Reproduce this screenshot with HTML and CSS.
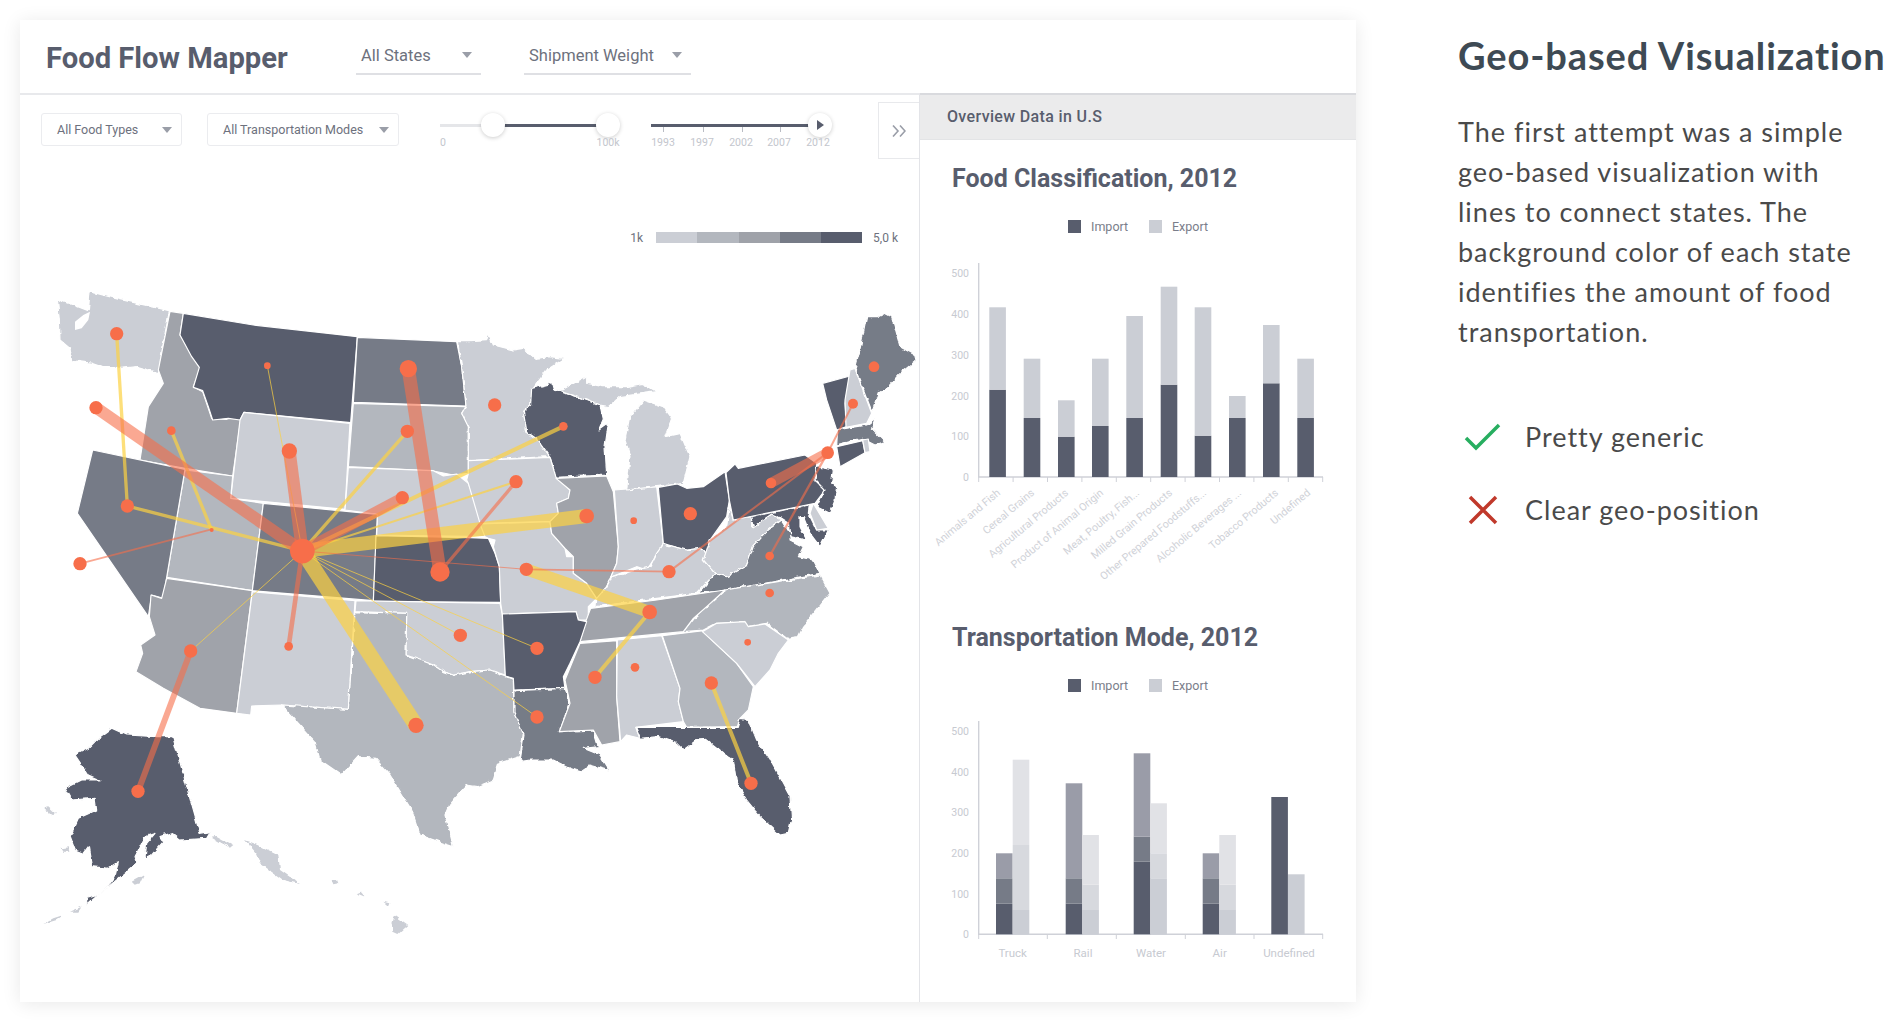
FILE: index.html
```html
<!DOCTYPE html>
<html lang="en">
<head>
    <meta charset="UTF-8">
    <title>Geo-based Visualization</title>
    <link rel="stylesheet" href="styles.css">
</head>
<body>
    <div class="panel">
        <header class="topbar">
            <h1 class="app-title">Food Flow Mapper</h1>
            <div class="dropdown dropdown-states"><span>All States</span><i class="caret"></i></div>
            <div class="dropdown dropdown-weight"><span>Shipment Weight</span><i class="caret"></i></div>
        </header>

        <div class="panel-body">
            <main class="map-area">
                <div class="toolbar">
                    <div class="select select-food"><span>All Food Types</span><i class="caret"></i></div>
                    <div class="select select-mode"><span>All Transportation Modes</span><i class="caret"></i></div>

                    <div class="range range-weight">
                        <div class="track"></div>
                        <div class="track-fill" style="left: 53px; width: 115px"></div>
                        <div class="knob" style="left: 53px"></div>
                        <div class="knob" style="left: 168px"></div>
                        <span class="range-label" style="left: 3px">0</span>
                        <span class="range-label" style="left: 168px">100k</span>
                    </div>

                    <div class="range range-year">
                        <div class="track-fill" style="left: 0; width: 168px"></div>
                        <i class="tick" style="left: 12px"></i>
                        <i class="tick" style="left: 52px"></i>
                        <i class="tick" style="left: 91px"></i>
                        <i class="tick" style="left: 129px"></i>
                        <div class="knob" style="left: 169px"><i class="play"></i></div>
                        <span class="range-label" style="left: 12px">1993</span>
                        <span class="range-label" style="left: 51px">1997</span>
                        <span class="range-label" style="left: 90px">2002</span>
                        <span class="range-label" style="left: 128px">2007</span>
                        <span class="range-label" style="left: 167px">2012</span>
                    </div>

                    <button class="collapse" type="button">
                        <svg width="14" height="12" viewBox="0 0 14 12"><path class="chevron" d="M1 0.5 L6 6 L1 11.5 M8 0.5 L13 6 L8 11.5"/></svg>
                    </button>
                </div>

                <div class="scale">
                    <span>1k</span>
                    <div class="scale-bar">
                        <i class="c1"></i><i class="c2"></i><i class="c3"></i><i class="c4"></i><i class="c5"></i>
                    </div>
                    <span>5,0 k</span>
                </div>

                <svg class="map" viewBox="0 0 2700 2196">
                    <defs>
                        <filter id="rough" x="-5%" y="-5%" width="110%" height="110%">
                            <feTurbulence type="fractalNoise" baseFrequency="0.05" numOctaves="2" seed="4"/>
                            <feDisplacementMap in="SourceGraphic" scale="14" xChannelSelector="R" yChannelSelector="G"/>
                        </filter>
                    </defs>
                    <!-- states, traced at 3x -->
                    <g class="states">
                        <polygon class="s1" filter="url(#rough)" points="112,85 130,95 160,105 205,122 210,65 300,88 448,122 415,308 350,290 300,295 250,292 215,280 155,272 150,235 120,210 118,150"/>
                        <polygon class="s3" points="450,124 490,130 480,195 520,260 540,295 520,350 548,365 575,445 620,448 662,430 662,450 638,618 495,595 360,570 385,410 430,340 415,300"/>
                        <polygon class="s5" points="490,130 700,165 1012,200 992,458 672,427 660,450 625,445 578,450 565,410 548,362 520,352 538,292 515,260 480,195"/>
                        <polygon class="s4" points="1012,202 1310,215 1325,290 1338,408 1000,397"/>
                        <polygon class="s2" points="1000,400 1338,410 1325,430 1345,470 1345,610 1300,615 1240,603 985,590"/>
                        <polygon class="s1" points="672,427 990,460 975,718 632,685 660,450"/>
                        <polygon class="s1" points="985,592 1240,602 1270,618 1310,612 1345,640 1375,720 1395,800 1070,795 1072,733 975,720"/>
                        <polygon class="s2" points="495,600 638,618 632,685 730,700 697,962 440,922"/>
                        <polygon class="s4" points="218,540 495,598 440,922 430,985 395,975 385,1040 172,730"/>
                        <polygon class="s4" points="730,700 1072,733 1060,992 697,962"/>
                        <polygon class="s5" points="1068,797 1350,803 1405,805 1425,850 1438,890 1442,997 1060,995"/>
                        <polygon class="s3" points="440,925 697,962 650,1330 540,1315 430,1255 348,1205 368,1150 362,1125 405,1095 388,1040 393,975 425,985"/>
                        <polygon class="s1" points="697,965 1005,992 985,1318 785,1305 695,1308 692,1335 650,1330"/>
                        <polygon class="s1" points="1008,992 1440,1000 1447,1035 1456,1215 1410,1200 1350,1205 1300,1215 1270,1205 1240,1185 1200,1170 1158,1155 1160,1030 1005,1025"/>
                        <polygon class="s2" filter="url(#rough)" points="1005,1025 1160,1030 1158,1155 1200,1170 1240,1185 1270,1205 1300,1215 1350,1205 1410,1200 1480,1225 1482,1330 1510,1390 1500,1460 1435,1480 1420,1530 1370,1550 1340,1545 1285,1610 1275,1635 1290,1690 1300,1730 1270,1720 1200,1695 1175,1620 1110,1515 1065,1465 1015,1460 965,1515 900,1470 885,1415 785,1305 985,1318"/>
                        <polygon class="s5" filter="url(#rough)" points="275,1375 320,1395 410,1400 458,1400 540,1690 572,1685 560,1705 480,1710 455,1688 420,1700 430,1715 395,1755 375,1765 380,1720 405,1690 375,1700 345,1760 352,1780 290,1830 240,1870 200,1905 200,1885 235,1875 270,1840 285,1820 295,1775 265,1795 215,1790 205,1730 190,1750 165,1740 150,1700 175,1645 230,1620 225,1585 155,1590 135,1555 185,1530 240,1530 205,1515 165,1455 205,1435 240,1400"/>

                        <polygon class="s1" filter="url(#rough)" points="1312,215 1350,215 1400,212 1405,190 1420,225 1480,240 1510,235 1545,265 1590,260 1635,265 1580,300 1540,355 1532,405 1510,425 1520,485 1555,510 1590,560 1345,572 1345,470 1325,430 1338,408 1325,290"/>
                        <polygon class="s5" filter="url(#rough)" points="1535,355 1595,340 1600,358 1670,380 1740,405 1750,450 1737,480 1765,460 1755,530 1760,615 1608,622 1590,560 1555,510 1520,485 1510,425 1532,405"/>
                        <polygon class="s1" points="1345,572 1590,562 1608,622 1650,660 1645,685 1610,700 1615,730 1590,755 1380,760 1345,640 1340,630 1345,610"/>
                        <polygon class="s1" points="1380,762 1590,755 1595,790 1635,835 1640,860 1660,860 1660,910 1700,940 1730,985 1705,1010 1705,1050 1675,1050 1668,1025 1447,1032 1442,1000 1438,890 1420,830 1425,810 1405,805 1395,800"/>
                        <polygon class="s3" points="1608,625 1760,618 1780,665 1795,830 1790,880 1760,950 1730,985 1700,940 1660,910 1660,860 1635,835 1595,790 1590,755 1615,730 1610,700 1645,685 1650,660"/>
                        <polygon class="s1" points="1783,660 1910,650 1930,820 1900,870 1880,900 1850,890 1775,920 1760,950 1790,880 1795,830"/>
                        <polygon class="s1" filter="url(#rough)" points="1820,660 1830,560 1815,510 1830,440 1870,390 1930,410 1955,445 1935,500 1980,490 2010,560 1990,640 1975,642"/>
                        <polygon class="s1" filter="url(#rough)" points="1625,360 1700,318 1700,340 1750,350 1820,350 1870,340 1910,365 1870,370 1800,380 1765,410 1740,405 1670,380 1600,358"/>
                        <polygon class="s5" points="1915,652 1972,642 2000,655 2050,650 2115,605 2128,690 2120,740 2070,810 2060,850 2040,835 2000,840 1960,830 1930,820"/>
                        <polygon class="s1" filter="url(#rough)" points="1775,920 1850,900 1890,890 1910,850 1930,822 1960,830 2000,840 2040,835 2060,850 2050,870 2085,910 2040,960 2030,970 1910,985 1728,1010 1730,985 1760,950"/>
                        <polygon class="s1" filter="url(#rough)" points="2070,810 2120,770 2128,710 2140,750 2195,740 2195,770 2255,732 2285,750 2245,780 2200,830 2180,885 2120,920 2085,910 2050,870"/>
                        <polygon class="s4" filter="url(#rough)" points="2035,970 2085,910 2120,920 2180,885 2200,830 2245,780 2285,750 2310,790 2310,810 2350,830 2335,860 2380,870 2400,910 2120,960"/>
                        <polygon class="s5" filter="url(#rough)" points="2192,740 2368,705 2365,730 2390,780 2425,780 2400,830 2370,790 2350,740 2340,740 2340,770 2360,810 2310,800 2305,760 2275,740 2255,732 2200,770"/>
                        <polygon class="s1" points="2380,700 2425,775 2390,780 2370,730"/>
                        <polygon class="s5" points="2118,608 2145,582 2155,595 2355,555 2390,580 2385,630 2415,660 2385,700 2140,750 2128,690"/>
                        <polygon class="s5" filter="url(#rough)" points="2390,590 2440,600 2435,640 2450,650 2445,690 2430,730 2390,710 2415,660 2385,630"/>
                        <polygon class="s5" points="2408,340 2490,318 2475,400 2480,470 2450,480 2420,390"/>
                        <polygon class="s1" points="2490,300 2505,295 2555,430 2540,460 2478,472 2475,390"/>
                        <polygon class="s4" filter="url(#rough)" points="2540,140 2575,140 2595,130 2615,140 2640,230 2685,255 2688,272 2640,310 2605,350 2575,370 2555,425 2505,295 2520,240"/>
                        <polygon class="s4" filter="url(#rough)" points="2450,480 2540,465 2565,445 2555,475 2595,515 2565,525 2525,505 2447,525"/>
                        <polygon class="s5" points="2450,530 2528,512 2535,548 2460,590"/>
                        <polygon class="s1" points="2528,510 2545,507 2550,545 2535,548"/>
                        <polygon class="s2" filter="url(#rough)" points="1990,1085 2020,1045 2060,1010 2115,960 2400,915 2430,970 2390,1020 2350,1070 2335,1100 2300,1105 2240,1060 2180,1070 2170,1055 2090,1060 2050,1080"/>
                        <polygon class="s3" points="1712,1015 1910,990 2115,960 2060,1010 2020,1045 1990,1085 1680,1115 1695,1060"/>
                        <polygon class="s5" points="1447,1032 1668,1025 1675,1050 1700,1055 1680,1115 1650,1180 1630,1220 1635,1255 1482,1260 1480,1225 1456,1218"/>
                        <polygon class="s4" filter="url(#rough)" points="1482,1262 1635,1255 1650,1300 1618,1385 1720,1380 1735,1430 1690,1435 1740,1455 1770,1502 1710,1485 1680,1505 1650,1495 1600,1470 1530,1470 1500,1475 1512,1395 1482,1330"/>
                        <polygon class="s3" points="1680,1120 1790,1112 1790,1280 1800,1415 1745,1425 1720,1380 1618,1385 1650,1300 1635,1230"/>
                        <polygon class="s1" points="1792,1110 1925,1097 1980,1255 1975,1295 1990,1355 1847,1372 1860,1405 1820,1395 1802,1415 1790,1280"/>
                        <polygon class="s2" points="1927,1097 2050,1082 2080,1115 2150,1180 2200,1250 2185,1320 2160,1345 2152,1370 2000,1372 1990,1355 1975,1295 1980,1255"/>
                        <polygon class="s1" points="2047,1085 2090,1060 2175,1055 2185,1070 2235,1062 2305,1110 2275,1150 2250,1200 2205,1250 2150,1180 2080,1115"/>
                        <polygon class="s5" filter="url(#rough)" points="1847,1372 2000,1372 2152,1372 2160,1345 2185,1348 2210,1410 2250,1470 2310,1580 2315,1650 2305,1690 2280,1695 2220,1640 2180,1590 2150,1540 2140,1470 2100,1440 2060,1408 2030,1410 1990,1440 1970,1420 1915,1400 1860,1405"/>
                    </g>

                    <path class="sound" d="M210 125 L190 135 165 155 165 180 185 175 205 150Z"/>

                    <!-- islands -->
                    <g class="islands" filter="url(#rough)">
                        <polygon points="70,1615 85,1612 108,1632 95,1635"/>
                        <polygon points="125,1735 145,1732 148,1745 130,1745"/>
                        <polygon points="150,1925 185,1910 175,1925"/>
                        <polygon points="70,1962 100,1945 130,1935 110,1950"/>
                        <polygon points="335,1835 372,1815 360,1840 345,1845"/>
                        <polygon points="572,1700 590,1698 640,1725 630,1733"/>
                        <polygon points="675,1710 715,1725 775,1755 780,1800 840,1842 790,1830 720,1780 705,1745"/>
                        <polygon points="935,1830 950,1827 955,1840 940,1843"/>
                        <polygon points="1010,1870 1022,1865 1035,1880"/>
                        <polygon points="1090,1895 1108,1900 1105,1908"/>
                        <polygon points="1122,1935 1165,1965 1135,1992 1120,1985 1115,1960"/>
                    </g>

                    <!-- flows -->
                    <g class="flows-y">
                        <line x1="290" y1="191" x2="322" y2="708" stroke-width="10"/>
                        <line x1="322" y1="708" x2="847" y2="843" stroke-width="10"/>
                        <line x1="454" y1="482" x2="574" y2="778" stroke-width="10"/>
                        <line x1="742" y1="287" x2="847" y2="843" stroke-width="3"/>
                        <line x1="1162" y1="484" x2="847" y2="843" stroke-width="10"/>
                        <line x1="1630" y1="469" x2="847" y2="843" stroke-width="12"/>
                        <line x1="1488" y1="635" x2="847" y2="843" stroke-width="6"/>
                        <line x1="1700" y1="738" x2="847" y2="843" stroke-width="42"/>
                        <line x1="1188" y1="1366" x2="847" y2="843" stroke-width="46"/>
                        <line x1="512" y1="1143" x2="847" y2="843" stroke-width="3"/>
                        <line x1="1321" y1="1096" x2="847" y2="843" stroke-width="3"/>
                        <line x1="1551" y1="1135" x2="847" y2="843" stroke-width="3"/>
                        <line x1="1551" y1="1341" x2="847" y2="843" stroke-width="3"/>
                        <line x1="1519" y1="898" x2="1889" y2="1026" stroke-width="36"/>
                        <line x1="1889" y1="1026" x2="1725" y2="1222" stroke-width="12"/>
                        <line x1="2074" y1="1239" x2="2193" y2="1540" stroke-width="12"/>
                    </g>
                    <g class="flows-o">
                        <line x1="228" y1="413" x2="847" y2="843" stroke-width="36"/>
                        <line x1="180" y1="881" x2="574" y2="778" stroke-width="5"/>
                        <line x1="808" y1="543" x2="847" y2="843" stroke-width="38"/>
                        <line x1="1165" y1="296" x2="1260" y2="906" stroke-width="40"/>
                        <line x1="1147" y1="683" x2="847" y2="843" stroke-width="32"/>
                        <line x1="1260" y1="906" x2="1488" y2="635" stroke-width="10"/>
                        <line x1="847" y1="843" x2="806" y2="1129" stroke-width="14"/>
                        <line x1="512" y1="1143" x2="354" y2="1564" stroke-width="18"/>
                        <line x1="847" y1="843" x2="1519" y2="898" stroke-width="3"/>
                        <line x1="1519" y1="898" x2="1947" y2="905" stroke-width="5"/>
                        <line x1="1947" y1="905" x2="2423" y2="548" stroke-width="6"/>
                        <line x1="2253" y1="639" x2="2423" y2="548" stroke-width="30"/>
                        <line x1="2249" y1="858" x2="2423" y2="548" stroke-width="7"/>
                        <line x1="2499" y1="401" x2="2423" y2="548" stroke-width="6"/>
                    </g>

                    <g class="dots">
                        <circle cx="290" cy="191" r="20"/>
                        <circle cx="228" cy="413" r="20"/>
                        <circle cx="454" cy="482" r="13"/>
                        <circle cx="742" cy="287" r="10"/>
                        <circle cx="808" cy="543" r="23"/>
                        <circle cx="1165" cy="296" r="26"/>
                        <circle cx="1162" cy="484" r="20"/>
                        <circle cx="1147" cy="683" r="20"/>
                        <circle cx="322" cy="708" r="20"/>
                        <circle cx="575" cy="780" r="6"/>
                        <circle cx="180" cy="881" r="20"/>
                        <circle cx="847" cy="843" r="37"/>
                        <circle cx="1260" cy="906" r="29"/>
                        <circle cx="1321" cy="1096" r="20"/>
                        <circle cx="806" cy="1129" r="13"/>
                        <circle cx="512" cy="1143" r="20"/>
                        <circle cx="354" cy="1564" r="20"/>
                        <circle cx="1188" cy="1366" r="23"/>
                        <circle cx="1424" cy="405" r="20"/>
                        <circle cx="1630" cy="469" r="13"/>
                        <circle cx="1488" cy="635" r="20"/>
                        <circle cx="1700" cy="738" r="22"/>
                        <circle cx="1841" cy="752" r="10"/>
                        <circle cx="2011" cy="731" r="20"/>
                        <circle cx="1519" cy="898" r="20"/>
                        <circle cx="1947" cy="905" r="20"/>
                        <circle cx="1889" cy="1026" r="22"/>
                        <circle cx="2253" cy="639" r="16"/>
                        <circle cx="2423" cy="548" r="19"/>
                        <circle cx="2499" cy="401" r="15"/>
                        <circle cx="2562" cy="290" r="16"/>
                        <circle cx="2249" cy="858" r="13"/>
                        <circle cx="2249" cy="969" r="13"/>
                        <circle cx="2183" cy="1117" r="10"/>
                        <circle cx="1551" cy="1135" r="20"/>
                        <circle cx="1551" cy="1341" r="20"/>
                        <circle cx="1725" cy="1222" r="20"/>
                        <circle cx="1845" cy="1192" r="13"/>
                        <circle cx="2074" cy="1239" r="20"/>
                        <circle cx="2193" cy="1540" r="20"/>
                    </g>
                </svg>
            </main>

            <aside class="overview">
                <div class="overview-head">Overview Data in U.S</div>

                <section class="chart-block chart-food">
                    <h2 class="chart-title">Food Classification, 2012</h2>
                    <div class="chart-legend">
                        <i class="swatch c5"></i><span>Import</span>
                        <i class="swatch c1"></i><span>Export</span>
                    </div>
                    <svg class="chart chart-1" viewBox="920 255 436 345">
                        <g class="y-labels">
                            <text x="969" y="277">500</text>
                            <text x="969" y="318">400</text>
                            <text x="969" y="359">300</text>
                            <text x="969" y="400">200</text>
                            <text x="969" y="440">100</text>
                            <text x="969" y="481">0</text>
                        </g>
                        <path class="axis" d="M978.7 263 V477 H1323"/>
                        <path class="axis-ticks" d="M978.7 477 v5 M1013.1 477 v5 M1047.5 477 v5 M1081.9 477 v5 M1116.3 477 v5 M1150.7 477 v5 M1185.1 477 v5 M1219.5 477 v5 M1253.9 477 v5 M1288.3 477 v5 M1322.7 477 v5"/>
                        <g class="fill-5">
                            <rect x="989.3" y="389.7" width="16.6" height="87.3"/>
                            <rect x="1023.7" y="418" width="16.6" height="59"/>
                            <rect x="1058" y="436.7" width="16.6" height="40.3"/>
                            <rect x="1092" y="426" width="16.6" height="51"/>
                            <rect x="1126.3" y="418" width="16.6" height="59"/>
                            <rect x="1160.7" y="384.7" width="16.6" height="92.3"/>
                            <rect x="1194.7" y="435.7" width="16.6" height="41.3"/>
                            <rect x="1229" y="418" width="16.6" height="59"/>
                            <rect x="1263" y="383.3" width="16.6" height="93.7"/>
                            <rect x="1297.3" y="418" width="16.6" height="59"/>
                        </g>
                        <g class="fill-1">
                            <rect x="989.3" y="307.3" width="16.6" height="82.4"/>
                            <rect x="1023.7" y="358.7" width="16.6" height="59.3"/>
                            <rect x="1058" y="400.3" width="16.6" height="36.4"/>
                            <rect x="1092" y="358.7" width="16.6" height="67.3"/>
                            <rect x="1126.3" y="316" width="16.6" height="102"/>
                            <rect x="1160.7" y="286.7" width="16.6" height="98"/>
                            <rect x="1194.7" y="307.3" width="16.6" height="128.4"/>
                            <rect x="1229" y="396" width="16.6" height="22"/>
                            <rect x="1263" y="325" width="16.6" height="58.3"/>
                            <rect x="1297.3" y="358.7" width="16.6" height="59.3"/>
                        </g>
                        <g class="x-rotated">
                            <text transform="translate(1001 494) rotate(-40)">Animals and Fish</text>
                            <text transform="translate(1035 494) rotate(-40)">Cereal Grains</text>
                            <text transform="translate(1069 494) rotate(-40)">Agricultural Products</text>
                            <text transform="translate(1104 494) rotate(-40)">Product of Animal Origin</text>
                            <text transform="translate(1140 494) rotate(-40)">Meat, Poultry, Fish...</text>
                            <text transform="translate(1173 494) rotate(-40)">Milled Grain Products</text>
                            <text transform="translate(1207 494) rotate(-40)">Other Prepared Foodstuffs...</text>
                            <text transform="translate(1242 494) rotate(-40)">Alcoholic Beverages ...</text>
                            <text transform="translate(1279 494) rotate(-40)">Tobacco Products</text>
                            <text transform="translate(1311 494) rotate(-40)">Undefined</text>
                        </g>
                    </svg>
                </section>

                <section class="chart-block chart-mode">
                    <h2 class="chart-title">Transportation Mode, 2012</h2>
                    <div class="chart-legend">
                        <i class="swatch c5"></i><span>Import</span>
                        <i class="swatch c1"></i><span>Export</span>
                    </div>
                    <svg class="chart chart-2" viewBox="920 715 436 250">
                        <g class="y-labels">
                            <text x="969" y="736">500</text>
                            <text x="969" y="777">400</text>
                            <text x="969" y="817">300</text>
                            <text x="969" y="858">200</text>
                            <text x="969" y="899">100</text>
                            <text x="969" y="939">0</text>
                        </g>
                        <path class="axis" d="M978.7 722 V935.3 H1323"/>
                        <path class="axis-ticks" d="M978.7 935 v5 M1047.3 935 v5 M1116.3 935 v5 M1185.3 935 v5 M1254 935 v5 M1322.7 935 v5"/>
                        <g class="fill-5">
                            <rect x="996" y="904.7" width="16.6" height="30.6"/>
                            <rect x="1065.7" y="904.7" width="16.6" height="30.6"/>
                            <rect x="1133.7" y="862.7" width="16.6" height="72.6"/>
                            <rect x="1202.7" y="904.7" width="16.6" height="30.6"/>
                            <rect x="1271.3" y="798" width="16.6" height="137.3"/>
                        </g>
                        <g class="fill-4">
                            <rect x="996" y="879.3" width="16.6" height="25.4"/>
                            <rect x="1065.7" y="879.3" width="16.6" height="25.4"/>
                            <rect x="1133.7" y="837.7" width="16.6" height="25"/>
                            <rect x="1202.7" y="879.3" width="16.6" height="25.4"/>
                        </g>
                        <g class="fill-3">
                            <rect x="996" y="854.3" width="16.6" height="25"/>
                            <rect x="1065.7" y="784.3" width="16.6" height="95"/>
                            <rect x="1133.7" y="754.3" width="16.6" height="83.4"/>
                            <rect x="1202.7" y="854.3" width="16.6" height="25"/>
                        </g>
                        <g class="fill-1">
                            <rect x="1012.7" y="911" width="16.6" height="24.3"/>
                            <rect x="1082.3" y="911" width="16.6" height="24.3"/>
                            <rect x="1150.3" y="879.3" width="16.6" height="56"/>
                            <rect x="1219.3" y="911" width="16.6" height="24.3"/>
                            <rect x="1288" y="875.3" width="16.6" height="60"/>
                        </g>
                        <g class="fill-e2">
                            <rect x="1012.7" y="846" width="16.6" height="65"/>
                            <rect x="1082.3" y="885.7" width="16.6" height="25.3"/>
                            <rect x="1150.3" y="854.3" width="16.6" height="25"/>
                            <rect x="1219.3" y="885.7" width="16.6" height="25.3"/>
                        </g>
                        <g class="fill-e3">
                            <rect x="1012.7" y="760.7" width="16.6" height="85.3"/>
                            <rect x="1082.3" y="836" width="16.6" height="49.7"/>
                            <rect x="1150.3" y="804.3" width="16.6" height="50"/>
                            <rect x="1219.3" y="836" width="16.6" height="49.7"/>
                        </g>
                        <g class="x-labels">
                            <text x="1012.7" y="958">Truck</text>
                            <text x="1083" y="958">Rail</text>
                            <text x="1151" y="958">Water</text>
                            <text x="1219.7" y="958">Air</text>
                            <text x="1289" y="958">Undefined</text>
                        </g>
                    </svg>
                </section>
            </aside>
        </div>
    </div>

    <div class="notes">
        <h2 class="notes-title">Geo-based Visualization</h2>
        <p class="notes-text">The first attempt was a simple geo-based visualization with lines to connect states. The background color of each state identifies the amount of food transportation.</p>
        <ul class="notes-list">
            <li>
                <svg class="mark" width="38" height="30" viewBox="0 0 38 30"><path class="mark-yes" d="M3 16 L13 26 L36 3"/></svg>
                Pretty generic
            </li>
            <li>
                <svg class="mark" width="38" height="30" viewBox="0 0 38 30"><path class="mark-no" d="M7 2 L33 28 M33 2 L7 28"/></svg>
                Clear geo-position
            </li>
        </ul>
    </div>
</body>
</html>
```

FILE: styles.css
```css
/* base */
* {
    margin: 0;
    padding: 0;
    box-sizing: border-box;
}
body {
    display: flex;
    align-items: flex-start;
    width: 1890px;
    height: 1036px;
    overflow: hidden;
    background: #fff;
    font-family: Roboto, sans-serif;
    color: #585d6d;
}
i {
    display: block;
}

/* dashboard panel */
.panel {
    width: 1336px;
    height: 982px;
    margin: 20px 0 0 20px;
    background: #fff;
    box-shadow: 0 2px 18px rgba(0, 0, 0, 0.09);
}
.topbar {
    display: flex;
    align-items: flex-end;
    height: 73px;
}
.app-title {
    width: 242px;
    margin: 0 68px 18px 26px;
    font-size: 29.2px;
    font-weight: 700;
    line-height: 34px;
    white-space: nowrap;
}
.dropdown {
    display: flex;
    align-items: center;
    justify-content: space-between;
    height: 38px;
    margin-bottom: 18px;
    padding: 0 9px 0 5px;
    border-bottom: 2px solid #dfe0e4;
    font-size: 16.5px;
    color: #6d717d;
}
.dropdown-states {
    width: 125px;
}
.dropdown-weight {
    width: 167px;
    margin-left: 43px;
}
.caret {
    width: 0;
    height: 0;
    border-left: 5px solid transparent;
    border-right: 5px solid transparent;
    border-top: 6px solid #9a9ea8;
}
.panel-body {
    display: flex;
    height: 909px;
}

/* map side */
.map-area {
    width: 900px;
    border-top: 2px solid #e8e9ec;
    border-right: 1px solid #e3e4e8;
}
.toolbar {
    display: flex;
    align-items: flex-start;
    height: 137px;
    padding: 7px 0 0 21px;
}
.select {
    display: flex;
    align-items: center;
    justify-content: space-between;
    height: 33px;
    margin-top: 11px;
    padding: 0 9px 0 15px;
    border: 1px solid #ebecef;
    border-radius: 3px;
    font-size: 12.5px;
    color: #6d717d;
}
.select-food {
    width: 141px;
}
.select-mode {
    width: 192px;
    margin-left: 25px;
}
.range {
    position: relative;
    width: 180px;
    height: 50px;
}
.range-weight {
    margin-left: 41px;
}
.range-year {
    margin-left: 31px;
}
.track,
.track-fill {
    position: absolute;
    top: 22px;
    height: 3px;
}
.track {
    left: 0;
    width: 168px;
    background: #e5e6e9;
}
.track-fill {
    background: #585d6d;
}
.tick {
    position: absolute;
    top: 25px;
    width: 1px;
    height: 5px;
    background: #b9bcc4;
}
.knob {
    position: absolute;
    top: 11px;
    width: 24px;
    height: 24px;
    margin-left: -12px;
    border-radius: 50%;
    background: #fff;
    box-shadow: 0 1px 4px rgba(0, 0, 0, 0.2);
}
.play {
    width: 0;
    height: 0;
    margin: 7px 0 0 9px;
    border-top: 5px solid transparent;
    border-bottom: 5px solid transparent;
    border-left: 7px solid #585d6d;
}
.range-label {
    position: absolute;
    top: 35px;
    transform: translateX(-50%);
    font-size: 10.5px;
    line-height: 12px;
    color: #c3c6cd;
}
.collapse {
    display: flex;
    align-items: center;
    justify-content: center;
    width: 41px;
    height: 57px;
    margin-left: auto;
    background: #fff;
    border: 1px solid #e8e9ec;
    border-right: none;
}
.chevron {
    fill: none;
    stroke: #9a9ea8;
    stroke-width: 1.6;
}
.scale {
    display: flex;
    align-items: center;
    justify-content: flex-end;
    height: 11px;
    margin-bottom: 27px;
    padding-right: 21px;
    font-size: 12px;
    color: #6d717d;
}
.scale-bar {
    display: flex;
    margin: 0 11px 0 13px;
}
.scale-bar i {
    width: 41.2px;
    height: 11px;
}
.c1 { background: #cbced5; }
.c2 { background: #b3b7be; }
.c3 { background: #9fa2a9; }
.c4 { background: #767b87; }
.c5 { background: #585d6d; }

.map {
    display: block;
    width: 900px;
    height: 732px;
    overflow: visible;
}
.states polygon {
    stroke: #fff;
    stroke-width: 3.5;
    stroke-linejoin: round;
}
.s1 { fill: #cbced5; }
.s2 { fill: #b3b7be; }
.s3 { fill: #a0a3aa; }
.s4 { fill: #767b87; }
.s5 { fill: #585d6d; }
.sound {
    fill: #fff;
}
.islands {
    fill: #cbced5;
}
.flows-y line {
    stroke: #fcd241;
    stroke-opacity: 0.7;
}
.flows-o line {
    stroke: #f76e4a;
    stroke-opacity: 0.6;
}
.dots {
    fill: #f76e4a;
}

/* overview side */
.overview {
    width: 436px;
}
.overview-head {
    height: 47px;
    padding-left: 27px;
    background: #ebebec;
    border-top: 2px solid #d9dade;
    border-bottom: 1px solid #e3e4e6;
    font-size: 16px;
    font-weight: 500;
    line-height: 44px;
    letter-spacing: 0.35px;
}
.chart-block {
    display: flex;
    flex-direction: column;
}
.chart-food {
    height: 482px;
    padding-top: 24px;
}
.chart-mode {
    padding-top: 1px;
}
.chart-title {
    height: 30px;
    padding-left: 32px;
    font-size: 25px;
    font-weight: 700;
    line-height: 30px;
    white-space: nowrap;
}
.chart-legend {
    display: flex;
    align-items: center;
    height: 14px;
    margin: 25px 0 22px;
    padding-left: 148px;
    font-size: 12.5px;
    color: #7a7e8a;
}
.swatch {
    width: 13px;
    height: 13px;
    margin-right: 10px;
}
.chart-legend span {
    width: 36px;
    margin-right: 22px;
}
.chart {
    display: block;
    width: 436px;
}
.chart-1 {
    height: 345px;
}
.chart-2 {
    height: 250px;
}
.y-labels text {
    font-size: 10.5px;
    text-anchor: end;
    fill: #c7cad1;
}
.x-labels text {
    font-size: 11.5px;
    text-anchor: middle;
    fill: #c7cad1;
}
.x-rotated text {
    font-size: 10.7px;
    text-anchor: end;
    fill: #d0d2d8;
}
.axis,
.axis-ticks {
    fill: none;
    stroke: #cfd1d8;
}
.axis {
    stroke-width: 1.4;
}
.fill-1 { fill: #cbced5; }
.fill-3 { fill: #9a9ca8; }
.fill-4 { fill: #767b87; }
.fill-5 { fill: #585d6d; }
.fill-e2 { fill: #d7d9de; }
.fill-e3 { fill: #e1e2e6; }

/* write-up on the right */
.notes {
    width: 432px;
    margin: 0 0 0 102px;
    font-family: Lato, sans-serif;
}
.notes-title {
    margin-top: 33px;
    font-size: 38px;
    font-weight: 700;
    line-height: 44px;
    letter-spacing: 0.9px;
    white-space: nowrap;
    color: #3e4a54;
}
.notes-text {
    width: 400px;
    margin-top: 35px;
    font-size: 27px;
    line-height: 40px;
    letter-spacing: 1px;
    color: #4a4a4a;
}
.notes-list {
    margin-top: 65px;
    list-style: none;
    font-size: 27px;
    line-height: 40px;
    letter-spacing: 1px;
    color: #4a4a4a;
}
.notes-list li {
    display: flex;
    align-items: center;
    height: 40px;
    margin-bottom: 33px;
}
.mark {
    flex: none;
    margin: 0 24px 0 5px;
}
.mark-yes,
.mark-no {
    fill: none;
    stroke-width: 3.5;
}
.mark-yes {
    stroke: #27ae60;
}
.mark-no {
    stroke: #c0392b;
}
```
